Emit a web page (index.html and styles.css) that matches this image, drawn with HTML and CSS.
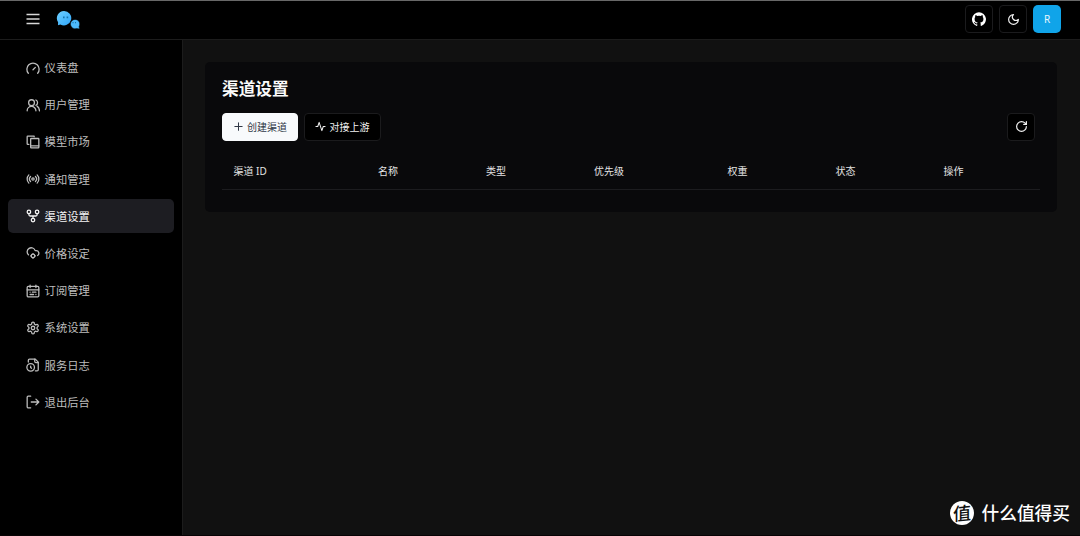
FILE: index.html
```html
<!DOCTYPE html>
<html lang="zh-CN">
<head>
    <meta charset="UTF-8">
    <meta name="viewport" content="width=device-width, initial-scale=1.0">
    <title>渠道设置</title>
    <link rel="stylesheet" href="styles.css">
</head>
<body>
    <header class="navbar">
        <svg class="icon menu" viewBox="0 0 16 16"><path d="M1.500 3.500h13M1.500 8h13M1.500 12.500h13"/></svg>
        <svg class="logo" viewBox="0 0 24 20">
            <defs>
                <linearGradient id="bubble" x1="0" y1="0" x2="1" y2="1">
                    <stop offset="0" stop-color="#6fd0ff"/>
                    <stop offset="1" stop-color="#2fa6fa"/>
                </linearGradient>
            </defs>
            <path fill="url(#bubble)" d="M8 1a7.200 7.200 0 1 1-3.600 13.400L2 15.200l.1-3A7.200 7.200 0 0 1 8 1z"/>
            <path fill="#4dbafc" stroke="#000" stroke-width=".5" d="M19 9.400a4.700 4.700 0 0 1 4.100 7l.4 2.600-2.700-.5A4.700 4.700 0 1 1 19 9.400z"/>
            <path fill="#1676ad" d="M7 6.600h1.600v1.600H7zM10.600 6.600h1.600v1.600h-1.600zM16.500 12h1v1.200h-1zM19 12h1v1.200h-1z"/>
        </svg>
        <div class="actions">
            <button class="btn square">
                <svg class="github" viewBox="0 0 24 24"><path d="M12 .5a12 12 0 0 0-3.8 23.4c.6.1.8-.3.8-.6v-2.2c-3.3.7-4-1.4-4-1.4-.6-1.4-1.4-1.8-1.4-1.8-1-.7.1-.7.1-.7 1.2.1 1.9 1.2 1.9 1.2 1 1.8 2.8 1.3 3.5 1 .1-.8.4-1.3.7-1.6-2.6-.3-5.4-1.3-5.4-5.9 0-1.3.5-2.4 1.2-3.2-.1-.3-.5-1.5.1-3.2 0 0 1-.3 3.3 1.2a11.500 11.500 0 0 1 6 0c2.300-1.500 3.300-1.200 3.300-1.200.6 1.700.2 2.900.1 3.200.8.8 1.200 1.900 1.200 3.200 0 4.600-2.800 5.600-5.500 5.900.4.4.8 1.100.8 2.200v3.300c0 .3.2.7.8.6A12 12 0 0 0 12 .5z"/></svg>
            </button>
            <button class="btn square">
                <svg class="icon moon" viewBox="0 0 24 24"><path d="M12 3a6 6 0 0 0 9 9 9 9 0 1 1-9-9Z"/></svg>
            </button>
            <button class="btn square avatar">R</button>
        </div>
    </header>

    <div class="main">
        <nav class="sidebar">
            <a class="item"><svg class="icon" viewBox="0 0 24 24"><path d="m12 15 4-4"/><path d="M4 21a10.500 10.500 0 1 1 16 0"/></svg>仪表盘</a>
            <a class="item"><svg class="icon" viewBox="0 0 24 24"><path d="M17 22a7.500 7.500 0 0 0-15 0"/><circle cx="9.500" cy="8" r="5"/><path d="M23 22c0-3.400-1.500-6.500-4-8M17 3.500a5 5 0 0 1 0 9"/></svg>用户管理</a>
            <a class="item"><svg class="icon" viewBox="0 0 24 24"><path d="M5 16H3a1 1 0 0 1-1-1V3a1 1 0 0 1 1-1h11v1"/><rect x="8" y="6" width="14" height="16" rx="1"/><path d="M8 18.500h14"/></svg>模型市场</a>
            <a class="item"><svg class="icon" viewBox="0 0 24 24"><path d="M4.900 19.100C1 15.200 1 8.800 4.900 4.900M7.800 16.200c-2.300-2.300-2.300-6.100 0-8.500"/><circle cx="12" cy="12" r="2"/><path d="M16.200 7.800c2.300 2.300 2.300 6.100 0 8.500M19.100 4.900C23 8.800 23 15.100 19.100 19"/></svg>通知管理</a>
            <a class="item active"><svg class="icon" viewBox="0 0 24 24"><circle cx="12" cy="19" r="3"/><circle cx="5" cy="5" r="3"/><circle cx="19" cy="5" r="3"/><path d="M19 8v2a2 2 0 0 1-2 2H7a2 2 0 0 1-2-2V8M12 12v4"/></svg>渠道设置</a>
            <a class="item"><svg class="icon" viewBox="0 0 24 24"><circle cx="12" cy="17" r="3"/><path d="M4.200 15.100A7 7 0 1 1 15.710 8h1.790a4.500 4.500 0 0 1 2.500 8.240M12 13v1M12 20v1M16 17h-1M9 17H8"/></svg>价格设定</a>
            <a class="item"><svg class="icon" viewBox="0 0 24 24"><rect x="2" y="4" width="20" height="18" rx="2"/><path d="M17 2v4M2 10h20M7 2v4M17 14h-6M13 18H7M7 14h.01M17 18h.01"/></svg>订阅管理</a>
            <a class="item"><svg class="icon" viewBox="0 0 24 24"><path d="M12.220 2h-.44a2 2 0 0 0-2 2v.18a2 2 0 0 1-1 1.730l-.43.25a2 2 0 0 1-2 0l-.15-.08a2 2 0 0 0-2.730.73l-.22.38a2 2 0 0 0 .73 2.730l.15.1a2 2 0 0 1 1 1.720v.51a2 2 0 0 1-1 1.740l-.15.09a2 2 0 0 0-.73 2.730l.22.38a2 2 0 0 0 2.730.73l.15-.08a2 2 0 0 1 2 0l.43.25a2 2 0 0 1 1 1.730V20a2 2 0 0 0 2 2h.44a2 2 0 0 0 2-2v-.18a2 2 0 0 1 1-1.730l.43-.25a2 2 0 0 1 2 0l.15.08a2 2 0 0 0 2.730-.73l.22-.39a2 2 0 0 0-.73-2.730l-.15-.08a2 2 0 0 1-1-1.740v-.5a2 2 0 0 1 1-1.740l.15-.09a2 2 0 0 0 .73-2.730l-.22-.38a2 2 0 0 0-2.730-.73l-.15.08a2 2 0 0 1-2 0l-.43-.25a2 2 0 0 1-1-1.730V4a2 2 0 0 0-2-2z"/><circle cx="12" cy="12" r="3"/></svg>系统设置</a>
            <a class="item"><svg class="icon" viewBox="0 0 24 24"><path d="M16 22h3a2 2 0 0 0 2-2V7l-5-5H6a2 2 0 0 0-2 2v3"/><path d="M15 2v4a2 2 0 0 0 2 2h4"/><circle cx="8" cy="16" r="6.500"/><path d="M9.500 17.500 8 16.250V14"/></svg>服务日志</a>
            <a class="item"><svg class="icon" viewBox="0 0 24 24"><path d="M8 22H4a2 2 0 0 1-2-2V4a2 2 0 0 1 2-2h4M17 17l5-5-5-5M22 12H9"/></svg>退出后台</a>
        </nav>

        <div class="content">
            <div class="card">
                <h1>渠道设置</h1>
                <div class="toolbar">
                    <button class="btn primary"><svg class="icon" viewBox="0 0 24 24"><path d="M4 12h16M12 4v16"/></svg>创建渠道</button>
                    <button class="btn"><svg class="icon" viewBox="0 0 24 24"><path d="M22 12h-4l-3 9L9 3l-3 9H2"/></svg>对接上游</button>
                    <button class="btn square refresh"><svg class="icon" viewBox="0 0 24 24"><path d="M21 12a9 9 0 1 1-9-9c2.520 0 4.930 1 6.740 2.740L21 8"/><path d="M21 3v5h-5"/></svg></button>
                </div>
                <table class="channels">
                    <thead>
                        <tr>
                            <th class="col-id">渠道 ID</th>
                            <th class="col">名称</th>
                            <th class="col">类型</th>
                            <th class="col-priority">优先级</th>
                            <th class="col">权重</th>
                            <th class="col">状态</th>
                            <th>操作</th>
                        </tr>
                    </thead>
                </table>
            </div>
        </div>
    </div>

    <div class="watermark"><span class="seal"><span class="seal-text">值</span></span>什么值得买</div>
</body>
</html>
```
FILE: styles.css
```css
* {
    box-sizing: border-box;
}
body {
    margin: 0;
    height: 100vh;
    display: flex;
    flex-direction: column;
    overflow: hidden;
    background: #111;
    color: #f2f2f2;
    font-family: "Noto Sans", "Noto Sans CJK SC", sans-serif;
    font-size: 10px;
    border-bottom: 1px solid #080305;
}
.icon {
    width: 12px;
    height: 12px;
    flex: none;
    fill: none;
    stroke: currentColor;
    stroke-width: 2.2;
    stroke-linecap: round;
    stroke-linejoin: round;
}

/* top bar */
.navbar {
    flex: none;
    height: 40px;
    display: flex;
    align-items: center;
    padding: 0 19px 2px 25px;
    background: #000;
    border-top: 1px solid #686868;
    border-bottom: 1px solid #1c1c1c;
}
.menu {
    width: 16px;
    height: 16px;
    color: #d8d8d8;
    stroke-width: 1.6;
    stroke-linecap: butt;
}
.logo {
    width: 24px;
    height: 20px;
    margin: 2px 0 0 15px;
}
.actions {
    display: flex;
    gap: 6px;
    margin-left: auto;
}

/* buttons */
.btn {
    height: 28px;
    display: flex;
    align-items: center;
    justify-content: center;
    gap: 3px;
    width: 77px;
    padding: 0;
    border: 1px solid #1b1b1d;
    border-radius: 4px;
    background: #000;
    color: #f2f2f2;
    font: inherit;
    white-space: nowrap;
}
.btn .icon {
    width: 11px;
    height: 11px;
}
.square {
    width: 28px;
}
.github {
    width: 14px;
    height: 14px;
    fill: #fff;
}
.btn .moon,
.refresh .icon {
    width: 13px;
    height: 13px;
}
.avatar {
    border: none;
    border-radius: 5px;
    background: #10a4e9;
    color: #e8f6fd;
}
.primary {
    width: 76px;
    border-color: #f8fafc;
    background: #f8fafc;
    color: #303846;
}
.refresh {
    margin-left: auto;
}

/* sidebar */
.main {
    flex: 1;
    display: flex;
    min-height: 0;
}
.sidebar {
    width: 183px;
    display: flex;
    flex-direction: column;
    gap: 3.7px;
    padding: 10.3px 8.5px 10px 8.3px;
    background: #000;
    border-right: 1px solid #1c1c1c;
}
.item {
    height: 33.5px;
    flex: none;
    display: flex;
    align-items: center;
    gap: 5px;
    padding-left: 17.3px;
    border-radius: 5px;
    color: #bdbdbd;
    font-size: 11.3px;
}
.item .icon {
    width: 14px;
    height: 14px;
    margin-top: 1px;
}
.active {
    background: #1d1d22;
    color: #f5f5f5;
}

/* content */
.content {
    flex: 1;
    padding: 22.4px 23px 0 22.4px;
}
.card {
    height: 149.5px;
    padding: 16.6px 17px 0 16.6px;
    border-radius: 5px;
    background: #09090b;
}
h1 {
    margin: 0;
    color: #fafafa;
    font-size: 16.7px;
    line-height: 20px;
    font-weight: 700;
}
.toolbar {
    display: flex;
    gap: 6px;
    margin-top: 14px;
    padding-right: 5px;
}
.channels {
    width: 100%;
    margin-top: 12px;
    border-collapse: collapse;
    table-layout: fixed;
}
.channels th {
    height: 36.5px;
    padding: 0 11px 0 11.5px;
    border-bottom: 1px solid #1c1c1f;
    color: #e2e2e2;
    font-weight: 400;
    text-align: left;
}
.col-id {
    width: 144.5px;
}
.col {
    width: 108px;
}
.col-priority {
    width: 133.5px;
}

.watermark {
    position: absolute;
    right: 10px;
    bottom: 10px;
    display: flex;
    align-items: center;
    gap: 8px;
    color: #fff;
    font-size: 17.7px;
    font-weight: 500;
    line-height: 26px;
}
.seal {
    width: 24px;
    height: 24px;
    display: flex;
    align-items: center;
    justify-content: center;
    border-radius: 50%;
    background: #fff;
    color: #111;
}
.seal-text {
    font-size: 18px;
    font-weight: 500;
    transform: skewX(-6deg) rotate(-6deg);
}
```
